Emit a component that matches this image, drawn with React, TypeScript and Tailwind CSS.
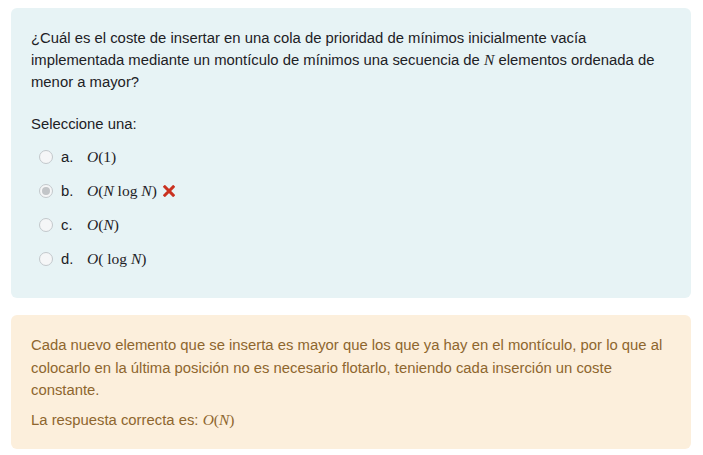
import React from 'react';

const Mi = ({ children }: { children: React.ReactNode }) => (
  <span className="italic">{children}</span>
);

const Radio = ({ checked }: { checked?: boolean }) => (
  <span className="w-[14px] h-[14px] rounded-full border border-[#c3c8cc] bg-[#f5f6f7] flex items-center justify-center shrink-0">
    {checked && <span className="w-[8px] h-[8px] rounded-full bg-[#c2c5c8]" />}
  </span>
);

const options: { letter: string; math: React.ReactNode; checked?: boolean; wrong?: boolean }[] = [
  { letter: 'a.', math: <><Mi>O</Mi>(1)</> },
  { letter: 'b.', math: <><Mi>O</Mi>(<Mi>N</Mi> log <Mi>N</Mi>)</>, checked: true, wrong: true },
  { letter: 'c.', math: <><Mi>O</Mi>(<Mi>N</Mi>)</> },
  { letter: 'd.', math: <><Mi>O</Mi>( log <Mi>N</Mi>)</> },
];

export default function App() {
  return (
    <div className="w-[703px] h-[455px] bg-white pt-[8px] pl-[11px] pr-[12px] font-['Liberation_Sans',Arial,sans-serif] text-[14.85px] leading-[22px] text-[#1d2125]">
      <div className="bg-[#e7f3f5] rounded-[6px] pt-[19px] pb-[28px] px-[20px]">
        <p>
          ¿Cuál es el coste de insertar en una cola de prioridad de mínimos inicialmente vacía implementada mediante un montículo de mínimos una secuencia de{' '}
          <span className="italic font-['Liberation_Serif',serif] text-[15.5px]">N</span> elementos ordenada de menor a mayor?
        </p>
        <p className="mt-[20px]">Seleccione una:</p>
        <div className="mt-[11px] flex flex-col gap-[12px] pl-[8px]">
          {options.map((o) => (
            <div key={o.letter} className="flex items-center h-[22px]">
              <Radio checked={o.checked} />
              <span className="ml-[8px] w-[26px]">{o.letter}</span>
              <span className="font-['Liberation_Serif',serif] text-[15.5px]">{o.math}</span>
              {o.wrong && (
                <svg className="ml-[6px]" width="12" height="12" viewBox="0 0 13 13">
                  <path d="M2 2 L11 11 M11 2 L2 11" stroke="#ca3120" strokeWidth="3.2" strokeLinecap="square" />
                </svg>
              )}
            </div>
          ))}
        </div>
      </div>
      <div className="mt-[17px] bg-[#fcefdc] rounded-[6px] pt-[19px] pb-[18px] px-[20px] text-[#8e662e] leading-[22.5px]">
        <p>
          Cada nuevo elemento que se inserta es mayor que los que ya hay en el montículo, por lo que al colocarlo en la última posición no es necesario flotarlo, teniendo cada inserción un coste constante.
        </p>
        <p className="mt-[7px]">
          La respuesta correcta es:{' '}
          <span className="font-['Liberation_Serif',serif] text-[15.5px]"><Mi>O</Mi>(<Mi>N</Mi>)</span>
        </p>
      </div>
    </div>
  );
}
